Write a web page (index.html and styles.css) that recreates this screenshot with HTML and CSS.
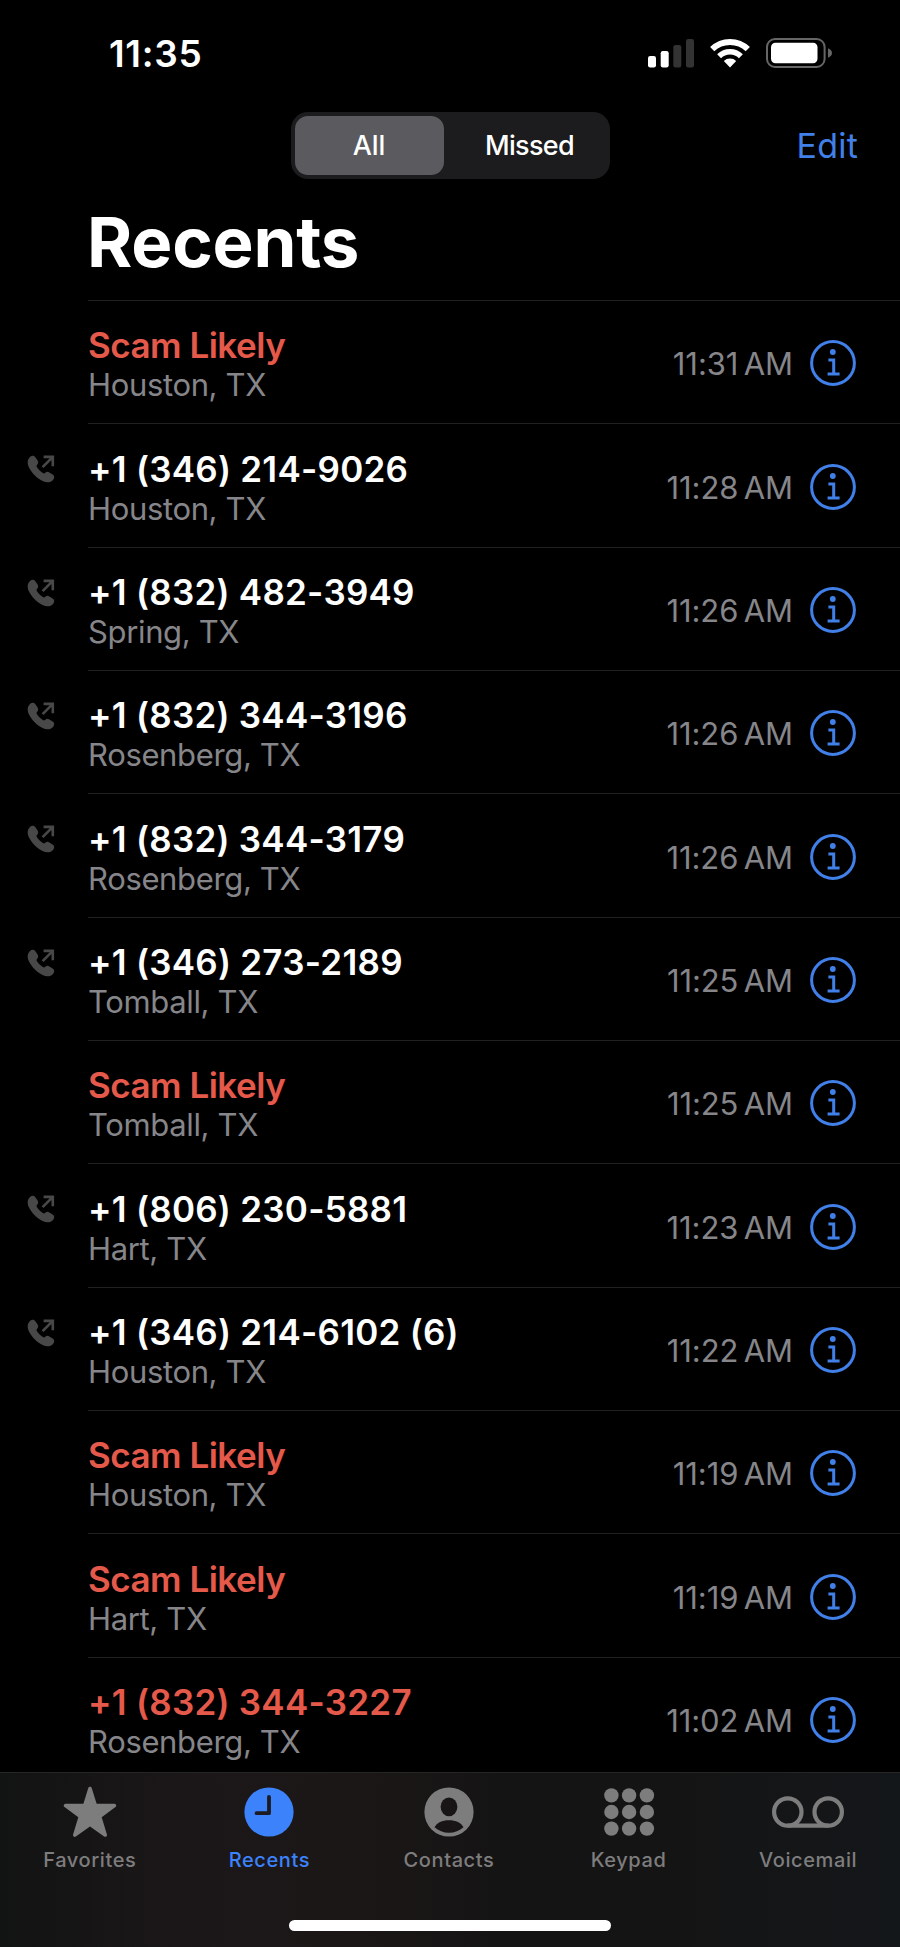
FILE: index.html
```html
<!DOCTYPE html>
<html lang="en">
<head>
    <meta charset="UTF-8">
    <meta name="viewport" content="width=device-width, initial-scale=1.0">
    <title>Recents</title>
    <link rel="stylesheet" href="styles.css">
</head>
<body>
    <div class="phone">
        <div class="status-bar">
            <div class="clock">11:35</div>
            <div class="status-icons">
                <svg class="signal" width="46" height="30" viewBox="0 0 46 30">
                    <rect x="0" y="18" width="8" height="11.5" rx="2.2" fill="#fff"/>
                    <rect x="12.7" y="13" width="8" height="16.5" rx="2.2" fill="#fff"/>
                    <rect x="25.3" y="7" width="8" height="22.5" rx="2.2" fill="#333"/>
                    <rect x="38" y="1" width="8" height="28.5" rx="2.2" fill="#333"/>
                </svg>
                <svg class="wifi" width="40" height="30" viewBox="0 0 40 30">
                    <path d="M2.2 11.2 A25.5 25.5 0 0 1 37.8 11.2" fill="none" stroke="#fff" stroke-width="6"/>
                    <path d="M9.1 18.2 A15.6 15.6 0 0 1 30.9 18.2" fill="none" stroke="#fff" stroke-width="5.6"/>
                    <path d="M20 29.4 L13.8 23.1 A9 9 0 0 1 26.2 23.1 Z" fill="#fff"/>
                </svg>
                <svg class="battery" width="66" height="30" viewBox="0 0 66 30">
                    <rect x="1" y="1" width="57.6" height="28" rx="8" fill="none" stroke="#666" stroke-width="2"/>
                    <rect x="5" y="4.8" width="46.5" height="20.4" rx="4.5" fill="#fff"/>
                    <path d="M62 10.3 Q66 12 66 15 Q66 18 62 19.7 Z" fill="#666"/>
                </svg>
            </div>
        </div>

        <div class="nav-bar">
            <div class="segmented">
                <div class="segment active">All</div>
                <div class="segment">Missed</div>
            </div>
            <div class="edit">Edit</div>
        </div>

        <h1 class="title">Recents</h1>

        <div class="call-list" id="call-list">
            <!-- Calls are loaded here -->
        </div>

        <div class="tab-bar">
            <div class="tabs">
                <div class="tab">
                    <svg width="54" height="52" viewBox="0 0 54 52">
                        <path d="M27 3.5 L32.2 20.2 L51.4 20.6 L36.6 31.6 L42.2 50 L27 39.2 L11.8 50 L17.4 31.6 L2.6 20.6 L21.8 20.2 Z" fill="currentColor" stroke="currentColor" stroke-width="3.6" stroke-linejoin="round"/>
                    </svg>
                    <span>Favorites</span>
                </div>
                <div class="tab active">
                    <svg width="54" height="52" viewBox="0 0 54 52">
                        <circle cx="27" cy="27" r="24.6" fill="currentColor"/>
                        <path d="M27 12 V28.2 H14.6" fill="none" stroke="#1c1a22" stroke-width="3.8" stroke-linecap="round" stroke-linejoin="round"/>
                    </svg>
                    <span>Recents</span>
                </div>
                <div class="tab">
                    <svg width="54" height="52" viewBox="0 0 54 52">
                        <circle cx="27" cy="27" r="24.6" fill="currentColor"/>
                        <ellipse cx="27" cy="21.8" rx="8.4" ry="9.4" fill="#191516"/>
                        <path d="M12.5 42.3 C15 37.8 20 35.2 27 35.2 C34 35.2 39 37.8 41.5 42.3 C37.6 45.8 32.6 47.8 27 47.8 C21.4 47.8 16.4 45.8 12.5 42.3 Z" fill="#191516"/>
                    </svg>
                    <span>Contacts</span>
                </div>
                <div class="tab">
                    <svg width="54" height="52" viewBox="0 0 54 52" fill="currentColor">
                        <circle cx="9.4" cy="10.4" r="7.2"/><circle cx="27.1" cy="10.4" r="7.2"/><circle cx="44.9" cy="10.4" r="7.2"/>
                        <circle cx="9.4" cy="27" r="7.2"/><circle cx="27.1" cy="27" r="7.2"/><circle cx="44.9" cy="27" r="7.2"/>
                        <circle cx="9.4" cy="43.6" r="7.2"/><circle cx="27.1" cy="43.6" r="7.2"/><circle cx="44.9" cy="43.6" r="7.2"/>
                    </svg>
                    <span>Keypad</span>
                </div>
                <div class="tab">
                    <svg width="74" height="52" viewBox="0 0 74 52" fill="none" stroke="currentColor" stroke-width="4.2">
                        <circle cx="16.8" cy="27" r="13.7"/>
                        <circle cx="57.2" cy="27" r="13.7"/>
                        <path d="M16.8 40.7 H57.2"/>
                    </svg>
                    <span>Voicemail</span>
                </div>
            </div>
            <div class="home-indicator"></div>
        </div>
    </div>

    <script>
        // name, place, time, type of call
        const calls = [
            ["Scam Likely", "Houston, TX", "11:31", "missed"],
            ["+1 (346) 214-9026", "Houston, TX", "11:28", "outgoing"],
            ["+1 (832) 482-3949", "Spring, TX", "11:26", "outgoing"],
            ["+1 (832) 344-3196", "Rosenberg, TX", "11:26", "outgoing"],
            ["+1 (832) 344-3179", "Rosenberg, TX", "11:26", "outgoing"],
            ["+1 (346) 273-2189", "Tomball, TX", "11:25", "outgoing"],
            ["Scam Likely", "Tomball, TX", "11:25", "missed"],
            ["+1 (806) 230-5881", "Hart, TX", "11:23", "outgoing"],
            ["+1 (346) 214-6102 (6)", "Houston, TX", "11:22", "outgoing"],
            ["Scam Likely", "Houston, TX", "11:19", "missed"],
            ["Scam Likely", "Hart, TX", "11:19", "missed"],
            ["+1 (832) 344-3227", "Rosenberg, TX", "11:02", "missed"]
        ];

        const outgoingIcon = `
            <svg width="28" height="28" viewBox="0 0 28 28">
                <path d="M3.2 1.8 C4.8 .2 7 .4 8.2 2 L10.6 5.6 C11.6 7.2 11.3 8.5 10.2 9.7 C9.3 10.7 9.3 11.2 10 12.2 C11.6 14.5 13.6 16.5 15.8 18 C16.8 18.7 17.3 18.7 18.3 17.8 C19.5 16.7 20.8 16.4 22.4 17.4 L26 19.8 C27.6 21 27.6 23 26.2 24.7 C23.6 27.8 19.5 28 15.5 26 C9.8 23.2 4.8 18.2 2 12.5 C0 8.5 .2 4.7 3.2 1.8 Z" fill="currentColor"/>
                <path d="M15.6 12.2 L25.6 2.2 M16.6 1.9 H25.8 V11.2" fill="none" stroke="currentColor" stroke-width="2.6"/>
            </svg>`;

        const infoIcon = `
            <svg class="info" width="46" height="46" viewBox="0 0 46 46">
                <circle cx="23" cy="23" r="21.4" fill="none" stroke="currentColor" stroke-width="3"/>
                <circle cx="22.8" cy="12" r="2.9" fill="currentColor"/>
                <path d="M18.4 19.9 H23.7 V33.9 M17.6 33.9 H29.6" fill="none" stroke="currentColor" stroke-width="3"/>
            </svg>`;

        function loadCalls() {
            const list = document.getElementById('call-list');
            for (const [name, place, time, type] of calls) {
                const isNumber = name.startsWith('+');
                const row = document.createElement('div');
                row.className = 'call ' + type;
                row.innerHTML = `
                    <div class="call-type">${type === 'outgoing' ? outgoingIcon : ''}</div>
                    <div class="call-body">
                        <div class="caller">
                            <div class="name ${isNumber ? 'number' : ''}">${name}</div>
                            <div class="place">${place}</div>
                        </div>
                        <div class="time">${time}&#8239;AM</div>
                        ${infoIcon}
                    </div>`;
                list.appendChild(row);
            }
        }

        loadCalls();
    </script>
</body>
</html>
```
FILE: styles.css
```css
* {
    box-sizing: border-box;
    margin: 0;
    padding: 0;
}

body {
    background-color: #000;
    color: #fff;
    font-family: Inter, "Liberation Sans", sans-serif;
}

.phone {
    display: flex;
    flex-direction: column;
    width: 900px;
    height: 1947px;
    overflow: hidden;
}

svg {
    display: block;
    flex-shrink: 0;
}

.status-bar {
    display: flex;
    justify-content: space-between;
    height: 111px;
    padding: 32px 68px 0 109px;
}

.clock {
    font-size: 37px;
    font-weight: 600;
    line-height: 44px;
    letter-spacing: 0.7px;
}

.status-icons {
    display: flex;
    gap: 16px;
    padding-top: 6px;
}

.nav-bar {
    display: grid;
    grid-template-columns: 1fr 319px 1fr;
    align-items: center;
    height: 69px;
}

.segmented {
    grid-column: 2;
    display: flex;
    height: 67px;
    padding: 4px;
    border-radius: 17px;
    background-color: #1c1c1e;
}

.segment {
    flex: 1;
    padding-left: 10px;
    line-height: 60px;
    text-align: center;
    font-size: 27px;
    font-weight: 500;
    letter-spacing: -0.7px;
    border-radius: 13px;
}

.segment.active {
    flex: 0 0 149px;
    padding-left: 0;
    letter-spacing: 0;
    background-color: #5b5a5f;
}

.edit {
    padding-right: 42px;
    text-align: right;
    font-size: 34px;
    letter-spacing: 0.2px;
    color: #4080e8;
}

.title {
    height: 120px;
    padding: 20px 0 0 87px;
    font-size: 69px;
    font-weight: 700;
    line-height: 84px;
    letter-spacing: -0.2px;
}

.call-list {
    flex: 1;
    min-height: 0;
    overflow: hidden;
}

.call {
    display: flex;
    height: 123.35px;
}

.call-type {
    width: 88px;
    padding: 32px 0 0 27px;
    color: #484848;
}

.call-body {
    flex: 1;
    display: flex;
    align-items: center;
    padding: 2px 44px 0 0;
    border-top: 1px solid #202020;
}

.caller {
    flex: 1;
    padding-top: 2px;
}

.name {
    font-size: 35px;
    font-weight: 600;
    line-height: 42px;
    letter-spacing: -0.5px;
}

.name.number {
    letter-spacing: 0.25px;
}

.missed .name {
    color: #e5594b;
}

.place {
    font-size: 31px;
    line-height: 38px;
    letter-spacing: -0.35px;
    color: #86868a;
}

.time {
    margin-right: 17px;
    padding-top: 2px;
    font-size: 31px;
    line-height: 38px;
    letter-spacing: -0.1px;
    color: #86868a;
}

.info {
    color: #4080e8;
}

.tab-bar {
    height: 175px;
    border-top: 1px solid #262626;
    background: linear-gradient(90deg, #121313 0%, #1b1718 20%, #1c1717 38%, #151414 55%, #141414 75%, #14171a 100%);
}

.tabs {
    display: flex;
    width: 898px;
    height: 147px;
    padding-top: 12px;
}

.tab {
    flex: 1;
    display: flex;
    flex-direction: column;
    align-items: center;
    font-size: 20px;
    font-weight: 500;
    line-height: 26px;
    color: #7e7d7e;
}

.tab span {
    margin-top: 10px;
    letter-spacing: 0.6px;
}

.tab.active {
    color: #3b82fb;
}

.home-indicator {
    width: 322px;
    height: 11px;
    margin: 0 auto;
    border-radius: 6px;
    background-color: #fff;
}
```
